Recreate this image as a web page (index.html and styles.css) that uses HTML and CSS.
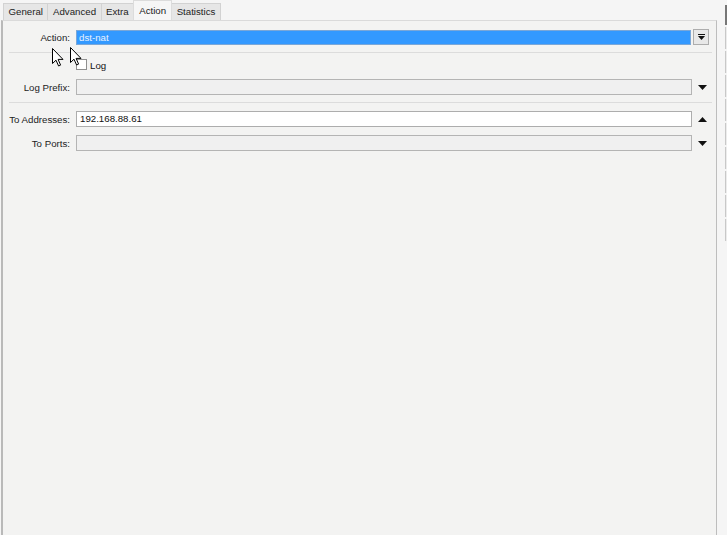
FILE: index.html
```html
<!DOCTYPE html>
<html>
<head>
<meta charset="utf-8">
<link rel="stylesheet" href="styles.css">
</head>
<body>
<div class="window">
  <div class="main">
    <div class="tabs">
      <div class="tab">General</div>
      <div class="tab">Advanced</div>
      <div class="tab">Extra</div>
      <div class="tab active">Action</div>
      <div class="tab">Statistics</div>
    </div>
    <div class="panel">
      <div class="row row-action">
        <div class="label">Action:</div>
        <div class="select">dst-nat</div>
        <div class="dropbtn">
          <svg width="7" height="7" viewBox="0 0 7 7"><rect x="0" y="0" width="7" height="1" fill="#111"/><polygon points="0,2 7,2 3.5,6" fill="#111"/></svg>
        </div>
      </div>
      <div class="sep"></div>
      <div class="row row-log">
        <div class="label"></div>
        <div class="check"></div>
        <div class="checklabel">Log</div>
      </div>
      <div class="row row-prefix">
        <div class="label">Log Prefix:</div>
        <div class="field disabled"></div>
        <div class="arrow"><svg width="9" height="5" viewBox="0 0 9 5"><polygon points="0,0 9,0 4.5,5" fill="#111"/></svg></div>
      </div>
      <div class="sep sep2"></div>
      <div class="row row-addr">
        <div class="label">To Addresses:</div>
        <div class="field">192.168.88.61</div>
        <div class="arrow"><svg width="9" height="5" viewBox="0 0 9 5"><polygon points="0,5 9,5 4.5,0" fill="#111"/></svg></div>
      </div>
      <div class="row row-ports">
        <div class="label">To Ports:</div>
        <div class="field disabled"></div>
        <div class="arrow"><svg width="9" height="5" viewBox="0 0 9 5"><polygon points="0,0 9,0 4.5,5" fill="#111"/></svg></div>
      </div>
    </div>
  </div>
  <div class="side">
    <div class="sbtn dark"></div>
    <div class="sbtn"></div>
    <div class="sbtn"></div>
    <div class="sbtn"></div>
    <div class="sbtn"></div>
    <div class="sbtn"></div>
    <div class="sbtn"></div>
    <div class="sbtn"></div>
    <div class="sbtn"></div>
    <div class="sbtn"></div>
  </div>
  <svg class="cursor c1" width="12" height="19" viewBox="0 0 12 19"><path d="M0.5 0.5 L0.5 15.5 L4 12.2 L6.6 18 L8.6 17.1 L6.1 11.4 L11 11.4 Z" fill="#fff" stroke="#000" stroke-width="1"/></svg>
  <svg class="cursor c2" width="12" height="19" viewBox="0 0 12 19"><path d="M0.5 0.5 L0.5 15.5 L4 12.2 L6.6 18 L8.6 17.1 L6.1 11.4 L11 11.4 Z" fill="#fff" stroke="#000" stroke-width="1"/></svg>
</div>
</body>
</html>
```

FILE: styles.css
```css
html, body {
  margin: 0;
  padding: 0;
}
body {
  width: 727px;
  height: 535px;
  overflow: hidden;
  background: #f4f4f4;
  font-family: "Liberation Sans", Arial, sans-serif;
  font-size: 9.7px;
  color: #111;
}
.window {
  position: relative;
  display: flex;
  width: 727px;
  height: 535px;
  overflow: hidden;
  background: #f5f5f5;
}
.main {
  width: 717px;
  display: flex;
  flex-direction: column;
  padding-left: 1px;
}
.tabs {
  display: flex;
  align-items: flex-end;
  height: 20px;
  padding-left: 2px;
  box-sizing: border-box;
}
.tab {
  height: 17px;
  box-sizing: border-box;
  padding: 0 4.5px;
  line-height: 16px;
  background: #e6e6e6;
  border: 1px solid #d2d2d2;
  border-bottom: none;
  margin-right: -1px;
  color: #222;
}
.tab.active {
  height: 20px;
  background: #f6f6f6;
  border-color: #dcdcdc;
  position: relative;
  z-index: 1;
  padding: 0 5px 0 5px;
  line-height: 19px;
}
.panel {
  flex: 1;
  background: #f3f3f2;
  border-top: 1px solid #dadada;
  border-left: 2px solid #b9b9b9;
  border-right: 1px solid #bdbdbd;
  box-sizing: border-box;
  padding-top: 8px;
}
.row {
  display: flex;
  align-items: center;
  height: 16px;
}
.label {
  width: 67px;
  flex: none;
  text-align: right;
  padding-right: 6px;
  color: #222;
}
.select {
  width: 615px;
  height: 15px;
  box-sizing: border-box;
  background: #3399ff;
  border: 1px solid #7aa7d8;
  color: #e8f2ff;
  line-height: 13px;
  padding-left: 2px;
}
.dropbtn {
  margin-left: 2px;
  width: 16px;
  height: 16px;
  box-sizing: border-box;
  border: 1px solid #adadad;
  background: #e8e8e8;
  display: flex;
  align-items: center;
  justify-content: center;
}
.sep {
  height: 1px;
  background: #dcdcdc;
  margin: 7px 4px 0 6px;
}
.sep2 { margin-top: 7px; }
.row-log {
  margin-top: 6px;
  height: 11px;
  align-items: flex-start;
}
.check {
  width: 11px;
  height: 11px;
  box-sizing: border-box;
  border: 1px solid #8f8f8f;
  background: #fff;
}
.checklabel {
  margin-left: 3px;
  line-height: 12px;
  margin-top: 1px;
}
.row-prefix { margin-top: 9px; }
.row-addr { margin-top: 8px; }
.row-ports { margin-top: 8px; }
.field {
  width: 616px;
  height: 16px;
  box-sizing: border-box;
  border: 1px solid #adadad;
  background: #fff;
  line-height: 14px;
  padding-left: 3px;
  color: #111;
}
.field.disabled {
  background: #f0f0f0;
  border-color: #b4b4b4;
}
.arrow {
  width: 20px;
  display: flex;
  justify-content: center;
}
.side {
  width: 10px;
  display: flex;
  flex-direction: column;
  padding-top: 5px;
  gap: 2px;
}
.sbtn {
  height: 22px;
  margin-left: 8px;
  border-left: 1px solid #c8c8c8;
  background: #ececec;
}
.sbtn.dark {
  height: 20px;
  border-left: 2px solid #777;
}
.cursor {
  position: absolute;
}
.c1 { left: 52px; top: 48px; }
.c2 { left: 70px; top: 47px; }
```
